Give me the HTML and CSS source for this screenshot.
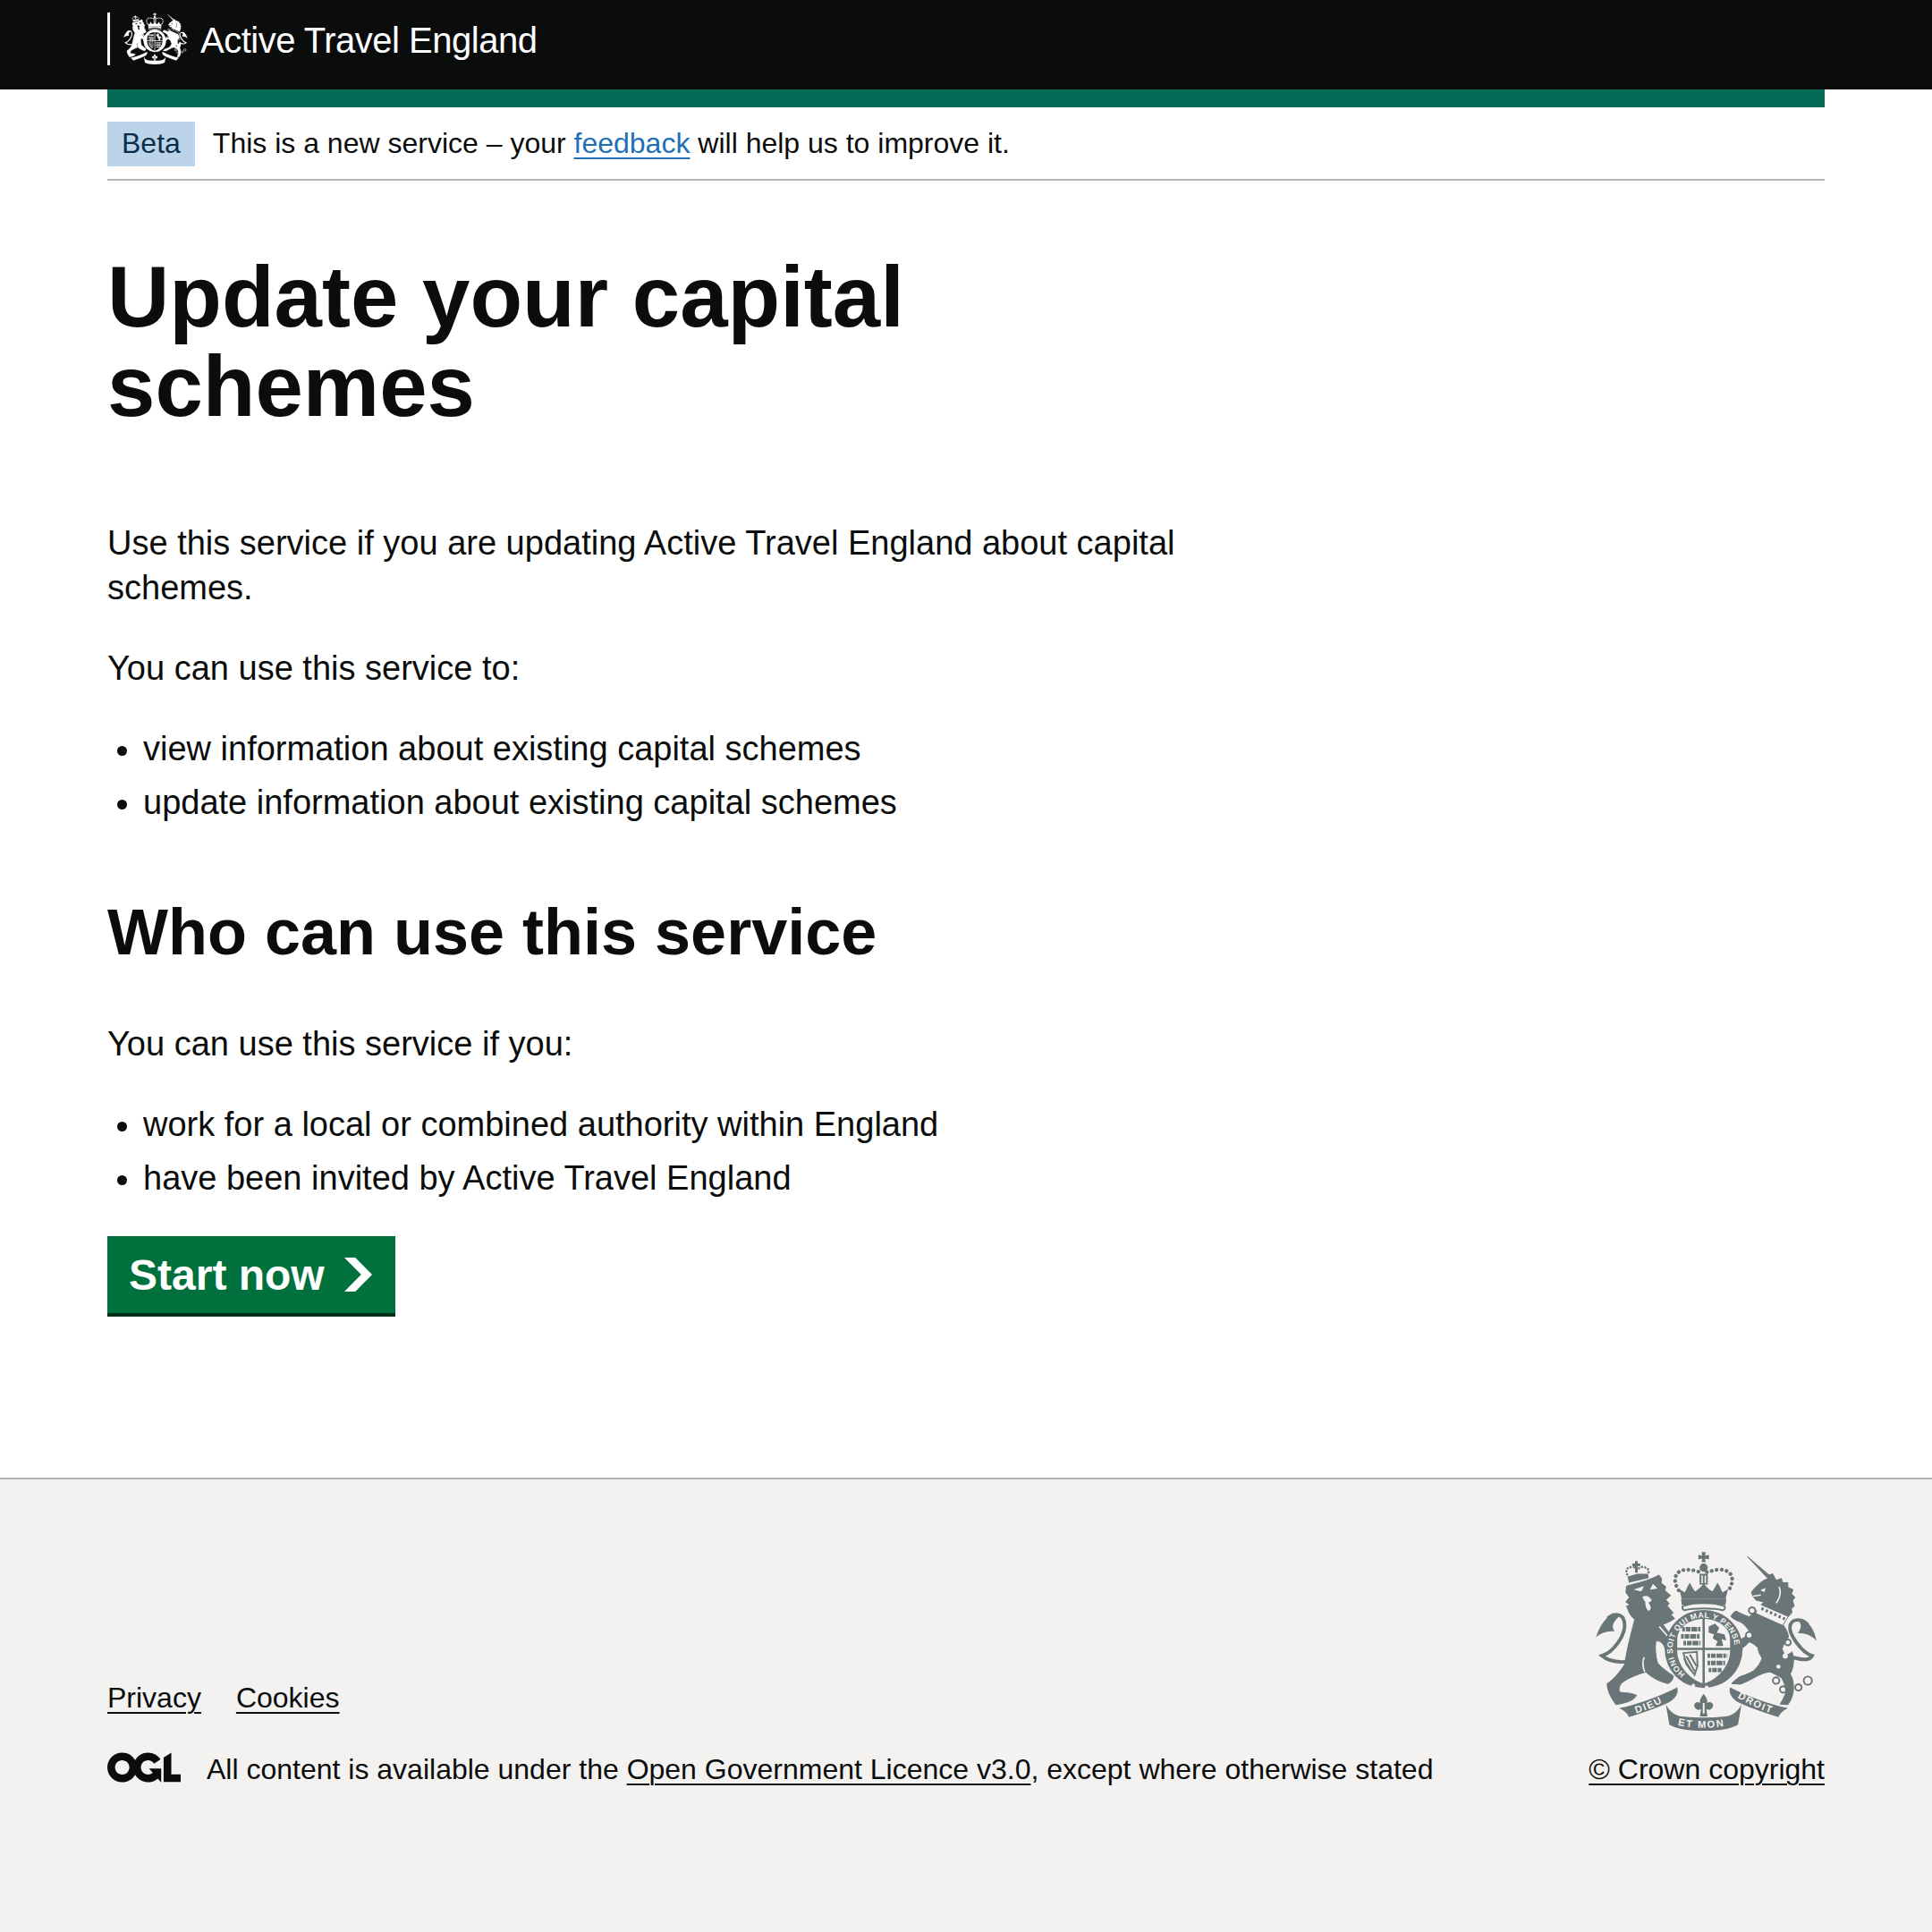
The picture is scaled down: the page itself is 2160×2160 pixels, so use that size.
FILE: index.html
```html
<!DOCTYPE html>
<html lang="en">
<head>
<meta charset="utf-8">
<title>Update your capital schemes</title>
<link rel="stylesheet" href="styles.css">
</head>
<body>
<svg class="defs" aria-hidden="true" width="0" height="0">
  <symbol id="arms" viewBox="65 38 760 622">
    <!-- lion -->
    <path class="ink soft" d="M172 158 C195 150 250 140 282 120 L292 132 L290 148 L306 160 L302 172 L322 190 L306 204 L318 218 L310 224 L332 250 L322 254 L336 268 C326 276 310 284 296 288 C312 310 330 335 342 362 C346 378 338 394 320 398 C308 392 306 372 298 358 C290 348 282 342 272 346 C268 370 272 400 278 420 C295 440 315 452 332 464 C330 478 322 488 312 490 C290 484 262 474 238 450 C215 458 185 466 158 486 C146 498 144 510 150 520 C170 522 190 522 206 530 C198 546 180 554 136 562 C120 540 106 515 106 490 C125 480 150 450 166 424 C170 395 180 345 200 272 C188 260 180 250 178 240 L172 226 L184 222 L170 212 L182 196 L170 180 Z"/>
    <path class="cut" d="M196 170 L232 158 L222 176 Z M262 150 L278 166 L252 170 Z M226 194 C238 188 250 190 258 206 C254 212 250 214 246 214 C256 226 258 236 248 242 C240 238 236 226 236 212 C232 206 228 200 226 194 Z"/>
    <path class="cutline" d="M284 296 L338 358 M234 450 C226 430 226 415 232 400"/>
    <path class="line" d="M180 415 C135 420 105 410 88 395 C125 385 172 325 165 282 C160 248 128 250 108 268"/>
    <path class="ink" d="M125 250 C95 270 78 300 68 332 C88 315 108 312 132 312 C118 295 128 280 145 262 Z"/>
    <!-- lion crown -->
    <path class="dots small" d="M180 128 C165 108 172 90 190 94 C198 92 205 96 210 102 C215 94 225 90 235 94 C252 98 250 115 240 122"/>
    <path class="ink" d="M176 126 L208 116 L244 116 L248 130 L180 146 Z M201 72 h9 v9 h9 v9 h-9 v22 h-9 v-22 h-9 v-9 h9 Z"/>
    <!-- main crown -->
    <path class="ink" d="M428 42 h14 l-2 12 l13 -3 v16 l-13 -3 l2 12 h-14 l2 -12 l-13 3 v-16 l13 3 Z"/>
    <circle class="ink" cx="435" cy="95" r="14"/>
    <path class="ink" d="M421 116 h28 v36 h-28 Z"/>
    <path class="cut" d="M427 122 h5 v26 h-5 Z M438 122 h5 v26 h-5 Z"/>
    <path class="dots" d="M350 172 C322 130 345 100 380 102 C400 102 412 108 424 110 M446 110 C458 108 470 102 490 102 C525 100 548 130 520 172"/>
    <path class="ink" d="M352 168 C360 172 366 176 370 180 C376 170 378 160 388 146 C396 160 400 170 406 176 C416 170 428 160 435 148 C442 160 454 170 464 176 C470 170 474 160 482 146 C492 160 494 170 500 180 C504 176 510 172 518 168 L510 200 L360 200 Z"/>
    <path class="ink" d="M358 200 H512 L510 222 H360 Z"/>
    <path class="thincut" d="M364 226 C400 212 470 212 506 226 C510 232 506 240 500 240 C470 232 400 232 370 240 C364 240 360 232 364 226 Z"/>
    <!-- garter -->
    <circle class="ink" cx="435" cy="372" r="133"/>
    <path class="cut" d="M345 340 C345 300 385 270 435 270 C485 270 525 300 525 340 V380 C525 430 480 478 435 490 C390 478 345 430 345 380 Z"/>
    <path class="ink" d="M431 270 h8 v220 h-8 Z M345 368 H525 v8 H345 Z"/>
    <path class="lions" d="M362 305 H424 M358 329 H424 M366 352 H424"/>
    <path class="lions" d="M448 395 H516 M448 420 H508 M452 444 H496"/>
    <path class="ink" d="M452 296 L474 286 L488 300 L480 316 L506 322 L512 344 L496 338 L502 362 L476 362 L482 346 L466 336 L470 322 L452 316 Z"/>
    <path class="thin" d="M366 386 L412 382 L414 430 L404 460 L376 424 Z"/>
    <path class="harp" d="M376 396 L404 448 M388 392 L410 430 M368 404 L392 446"/>
    <circle class="cut" cx="400" cy="497" r="6"/>
    <circle class="cut" cx="445" cy="503" r="6"/>
    <!-- unicorn -->
    <path class="ink soft" d="M585 58 L658 120 L670 116 L682 138 L700 132 L704 146 L722 146 L722 162 L740 170 L734 184 L746 196 L738 208 L744 226 L734 234 L736 248 L722 264 L706 290 C716 305 724 318 724 332 C714 346 706 358 702 372 L712 394 C722 392 730 388 736 382 C744 400 744 430 730 458 C738 470 744 490 740 520 C736 540 730 552 722 562 L696 560 C704 546 712 532 716 518 C714 500 708 482 700 470 C685 462 672 454 660 450 C645 452 630 458 618 464 C600 474 578 486 560 492 L530 490 C540 480 550 472 560 466 C578 460 594 454 606 446 C620 432 630 418 634 404 C626 390 620 378 620 368 C610 358 600 350 590 348 C582 358 572 366 560 372 C552 364 548 354 548 344 C560 340 570 336 574 332 C582 326 590 316 590 310 C580 296 572 286 560 280 C548 276 536 270 528 262 C532 252 538 246 546 243 C560 250 575 258 590 262 C602 254 612 246 620 238 C626 228 632 220 640 212 L614 206 C606 198 600 188 598 178 C612 160 628 146 640 138 L654 132 Z"/>
    <path class="cut" d="M625 220 L722 262 L704 290 L614 250 Z"/>
    <path class="dots2" d="M632 234 L712 270"/>
    <path class="cut" d="M628 172 L646 164 L642 178 Z"/>
    <path class="cutline" d="M692 160 C700 180 694 200 682 216 M604 192 L630 188"/>
    <circle class="thincut" cx="600" cy="241" r="11"/>
    <circle class="thincut" cx="590" cy="325" r="11"/>
    <circle class="thincut" cx="722" cy="350" r="10"/>
    <circle class="cut" cx="713" cy="396" r="9"/>
    <circle class="cut" cx="690" cy="432" r="7"/>
    <circle class="thin" cx="682" cy="480" r="11"/>
    <circle class="thin" cx="706" cy="510" r="11"/>
    <circle class="thin" cx="758" cy="503" r="11"/>
    <circle class="thin" cx="790" cy="480" r="14"/>
    <path class="line" d="M735 400 C790 415 800 405 805 395 C770 385 722 320 730 290 C740 265 775 270 790 290"/>
    <path class="ink" d="M770 270 C800 285 812 310 820 345 C800 322 780 320 755 318 C772 300 768 285 755 272 Z"/>
    <!-- ribbons -->
    <path class="ink" d="M148 573 C200 565 280 535 345 503 C352 525 335 545 312 556 C270 575 225 590 180 604 C175 590 160 580 148 573 Z"/>
    <path class="ink" d="M722 573 C670 565 590 535 525 503 C518 525 535 545 558 556 C600 575 645 590 690 604 C695 590 710 580 722 573 Z"/>
    <path class="ink" d="M306 560 C318 585 335 598 360 602 C410 607 460 607 510 602 C535 598 552 585 564 560 L552 630 C510 658 360 658 318 630 Z"/>
    <path class="ink" d="M435 525 C446 540 450 548 446 556 C465 545 478 570 455 580 L444 578 L448 602 L422 602 L426 578 L415 580 C392 570 405 545 424 556 C420 548 424 540 435 525 Z"/>
    <path class="cut" d="M432 556 h6 v36 h-6 Z"/>
  </symbol>
  <defs>
    <path id="arc-motto" d="M372 457 A106 106 0 1 1 498 457"/>
    <path id="arc-dieu" d="M205 592 C245 580 285 562 322 537"/>
    <path id="arc-droit" d="M550 537 C585 560 630 580 675 595"/>
    <path id="arc-et" d="M347 632 Q435 650 523 632"/>
  </defs>
</svg>

<header class="site-header">
  <div class="container">
    <a class="logo" href="#">
      <svg class="logo-arms" aria-hidden="true"><use href="#arms"/></svg>
      <span class="logo-text">Active Travel England</span>
    </a>
  </div>
</header>

<div class="container">
  <div class="service-bar"></div>
  <div class="phase-banner">
    <strong class="tag">Beta</strong>
    <span class="phase-text">This is a new service – your <a class="link-blue" href="#">feedback</a> will help us to improve it.</span>
  </div>

  <main class="main">
    <div class="two-thirds">
      <h1 class="heading-xl">Update your capital schemes</h1>
      <p class="body">Use this service if you are updating Active Travel England about capital schemes.</p>
      <p class="body">You can use this service to:</p>
      <ul class="bullets">
        <li>view information about existing capital schemes</li>
        <li>update information about existing capital schemes</li>
      </ul>
      <h2 class="heading-l">Who can use this service</h2>
      <p class="body">You can use this service if you:</p>
      <ul class="bullets">
        <li>work for a local or combined authority within England</li>
        <li>have been invited by Active Travel England</li>
      </ul>
      <a class="start-button" href="#"><span class="start-label">Start now</span>
        <svg class="start-icon" viewBox="0 0 33 40" preserveAspectRatio="none" aria-hidden="true"><path d="M0 0h13l20 20-20 20H0l20-20z"/></svg>
      </a>
    </div>
  </main>
</div>

<footer class="footer">
  <div class="container footer-meta">
    <div class="footer-left">
      <ul class="footer-links">
        <li><a class="link-dark" href="#">Privacy</a></li>
        <li><a class="link-dark" href="#">Cookies</a></li>
      </ul>
      <div class="licence">
        <svg class="ogl" viewBox="0 0 483.2 195.7" aria-hidden="true"><path d="M421.5 142.8V.1l-50.7 32.3v161.1h112.4v-50.7zm-122.3-9.6A47.12 47.12 0 0 1 221 97.8c0-26 21.1-47.1 47.1-47.1 16.7 0 31.4 8.7 39.7 21.8l42.7-27.2A97.63 97.63 0 0 0 268.1 0c-36.5 0-68.3 20.1-85.1 49.7A98 98 0 0 0 97.8 0C43.9 0 0 43.9 0 97.8s43.9 97.8 97.8 97.8c36.5 0 68.3-20.1 85.1-49.7a97.76 97.76 0 0 0 149.6 25.4l19.4 22.2h3v-87.8h-80l24.3 27.5zM97.8 145c-26 0-47.1-21.1-47.1-47.1s21.1-47.1 47.1-47.1 47.2 21 47.2 47S123.8 145 97.8 145"/></svg>
        <span>All content is available under the <a class="link-dark" href="#">Open Government Licence v3.0</a>, except where otherwise stated</span>
      </div>
    </div>
    <div class="footer-right">
      <svg class="footer-arms" viewBox="65 38 760 622" aria-hidden="true">
        <use href="#arms" x="65" y="38" width="760" height="622"/>
        <text class="motto"><textPath href="#arc-motto">HONI SOIT QUI MAL Y PENSE</textPath></text>
        <text class="motto-big"><textPath href="#arc-dieu">DIEU</textPath></text>
        <text class="motto-big"><textPath href="#arc-droit">DROIT</textPath></text>
        <text class="motto-big"><textPath href="#arc-et">ET MON</textPath></text>
      </svg>
      <a class="link-dark" href="#">© Crown copyright</a>
    </div>
  </div>
</footer>
</body>
</html>
```

FILE: styles.css
```css
* { box-sizing: border-box; }

html, body { margin: 0; padding: 0; }

body {
  min-height: 2160px;
  display: flex;
  flex-direction: column;
  font-family: "Liberation Sans", Arial, sans-serif;
  color: #0b0c0c;
  background: #fff;
}

.defs { position: absolute; }

.container { width: 1920px; margin: 0 auto; }

/* Arms artwork */
.ink { fill: var(--arms-ink); }
.soft { stroke: var(--arms-ink); stroke-width: 3; stroke-linejoin: round; }
.cut { fill: var(--arms-bg); }
.line { fill: none; stroke: var(--arms-ink); stroke-width: 12; }
.thin { fill: none; stroke: var(--arms-ink); stroke-width: 6; }
.thincut { fill: var(--arms-bg); stroke: var(--arms-ink); stroke-width: 6; }
.cutline { fill: none; stroke: var(--arms-bg); stroke-width: 5; }
.harp { fill: none; stroke: var(--arms-ink); stroke-width: 6; }
.lions { fill: none; stroke: var(--arms-ink); stroke-width: 15; stroke-dasharray: 9 3 16 3 20 3; }
.dots { fill: none; stroke: var(--arms-ink); stroke-width: 13; stroke-linecap: round; stroke-dasharray: 0.1 17; }
.dots.small { stroke-width: 8; stroke-dasharray: 0.1 11; }
.dots2 { fill: none; stroke: var(--arms-ink); stroke-width: 10; stroke-dasharray: 8 8; }

.site-header { height: 100px; background: #0b0c0c; --arms-ink: #fff; --arms-bg: #0b0c0c; }
.site-header .container { height: 100px; padding-top: 14px; }

.logo {
  display: flex;
  align-items: flex-start;
  height: 59px;
  border-left: 3px solid #fff;
  color: #fff;
  text-decoration: none;
}
.logo-arms { width: 72px; height: 59px; margin-left: 15px; flex: none; }
.logo-text {
  margin-left: 14px;
  padding-top: 2px;
  font-size: 40px;
  line-height: 59px;
  letter-spacing: -0.5px;
}

.service-bar { height: 20px; background: #046a55; }

.phase-banner {
  display: flex;
  align-items: center;
  height: 82px;
  padding-top: 16px;
  padding-bottom: 14px;
  border-bottom: 2px solid #b1b4b6;
}
.tag {
  display: block;
  height: 50px;
  padding: 0 16px;
  background: #bbd4ea;
  color: #0c2d4a;
  font-size: 32px;
  font-weight: 400;
  line-height: 48px;
}
.phase-text { margin-left: 20px; margin-top: -2px; font-size: 32px; line-height: 50px; }

.link-blue {
  color: #1d70b8;
  text-decoration-thickness: 2px;
  text-underline-offset: 0.1578em;
}
.link-dark {
  color: #0b0c0c;
  text-decoration-thickness: 2px;
  text-underline-offset: 0.1578em;
}

.main { padding: 80px 0; }
.two-thirds { width: 1250px; }

.heading-xl { margin: 0 0 100px; font-size: 96px; line-height: 100px; font-weight: 700; }
.heading-l { margin: 0 0 60px; padding-top: 40px; font-size: 72px; line-height: 80px; font-weight: 700; }

.body { margin: 0 0 40px; font-size: 38px; line-height: 50px; }

.bullets {
  margin: 0 0 40px;
  padding: 0 0 0 40px;
  font-size: 38px;
  line-height: 50px;
}
.bullets li { margin-bottom: 10px; }
.bullets li:last-child { margin-bottom: 0; }

.start-button {
  display: inline-flex;
  align-items: center;
  height: 86px;
  margin-bottom: 104px;
  padding: 0 26px 0 24px;
  background: #00703c;
  box-shadow: 0 4px 0 #002d18;
  color: #fff;
  font-size: 48px;
  font-weight: 700;
  line-height: 86px;
  text-decoration: none;
}
.start-label { position: relative; top: 1px; }
.start-icon { width: 31px; height: 38px; margin-left: 22px; fill: #fff; }

.footer {
  flex: 1;
  padding-top: 80px;
  background: #f3f2f1;
  border-top: 2px solid #b1b4b6;
  --arms-ink: #6a7577;
  --arms-bg: #f3f2f1;
  font-size: 32px;
  line-height: 40px;
}
.footer-meta { display: flex; justify-content: space-between; align-items: flex-end; }

.footer-links { display: flex; gap: 39px; margin: 0 0 40px; padding: 0; list-style: none; }

.licence { display: flex; align-items: center; }
.ogl { width: 82px; height: 34px; margin-right: 29px; margin-top: -4px; fill: #0b0c0c; flex: none; }

.footer-right { display: flex; flex-direction: column; align-items: center; gap: 20px; }
.footer-arms { width: 250px; height: 204px; display: block; }

.motto { font-size: 27px; font-weight: 700; fill: #f3f2f1; letter-spacing: 1.5px; }
.motto-big { font-size: 34px; font-weight: 700; fill: #f3f2f1; letter-spacing: 5px; }
```
